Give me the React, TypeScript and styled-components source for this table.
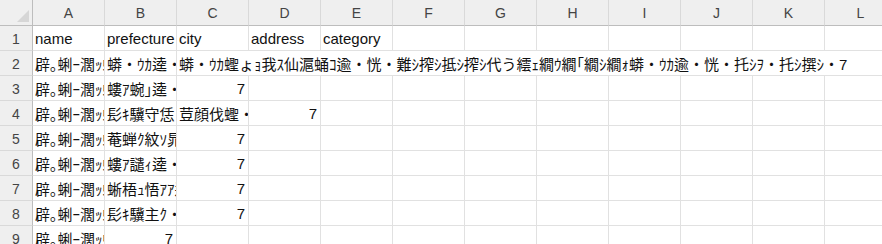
import React from "react";
import styled, { createGlobalStyle } from "styled-components";

const GlobalStyle = createGlobalStyle`
  html, body {
    margin: 0;
    padding: 0;
    background: #ffffff;
    overflow: hidden;
  }
  body {
    font-family: "Liberation Sans", "Noto Sans CJK JP", sans-serif;
  }
`;

const COLUMNS = ["A", "B", "C", "D", "E", "F", "G", "H", "I", "J", "K", "L"];

type CellData = {
  col: number;
  text: string;
  right?: boolean;
  span?: number;
};

const SHOP = "辟｡蜊ｰ濶ｯ蜩・";

const rows: CellData[][] = [
  [
    { col: 0, text: "name" },
    { col: 1, text: "prefecture" },
    { col: 2, text: "city" },
    { col: 3, text: "address" },
    { col: 4, text: "category" },
  ],
  [
    { col: 0, text: SHOP },
    { col: 1, text: "蟒・ｳｶ逵・" },
    {
      col: 2,
      span: 10,
      text: "蟒・ｳｶ蟶ょｮ我ｽ仙滬蛹ｺ逾・恍・難ｼ搾ｼ抵ｼ搾ｼ代う繧ｪ繝ｳ繝｢繝ｼ繝ｫ蟒・ｳｶ逾・恍・托ｼｦ・托ｼ撰ｼ・7",
    },
  ],
  [
    { col: 0, text: SHOP },
    { col: 1, text: "螻ｱ蜿｣逵・" },
    { col: 2, text: "7", right: true },
  ],
  [
    { col: 0, text: SHOP },
    { col: 1, text: "髟ｷ驥守恁" },
    { col: 2, text: "荳顔伐蟶・" },
    { col: 3, text: "7", right: true },
  ],
  [
    { col: 0, text: SHOP },
    { col: 1, text: "菴蝉ｸ紋ｿ晁ｸ・" },
    { col: 2, text: "7", right: true },
  ],
  [
    { col: 0, text: SHOP },
    { col: 1, text: "螻ｱ譴ｨ逵・" },
    { col: 2, text: "7", right: true },
  ],
  [
    { col: 0, text: SHOP },
    { col: 1, text: "蜥梧ｭ悟ｱｱ逵・" },
    { col: 2, text: "7", right: true },
  ],
  [
    { col: 0, text: SHOP },
    { col: 1, text: "髟ｷ驥主ｸ・" },
    { col: 2, text: "7", right: true },
  ],
  [
    { col: 0, text: SHOP },
    { col: 1, text: "7", right: true },
  ],
];

const Sheet = styled.div`
  display: grid;
  grid-template-columns: 33px repeat(12, 72px);
  grid-template-rows: 26px;
  grid-auto-rows: 25px;
  width: max-content;
`;

const Corner = styled.div`
  background: #efefef;
  border-right: 1px solid #bdbdbd;
  border-bottom: 1px solid #bdbdbd;
  display: flex;
  align-items: flex-end;
  justify-content: flex-end;
  padding: 0 3px 3px 0;
  box-sizing: border-box;
`;

const ColHeader = styled.div`
  background: #efefef;
  border-right: 1px solid #d9d9d9;
  border-bottom: 1px solid #bdbdbd;
  display: flex;
  align-items: center;
  justify-content: center;
  font-size: 14px;
  color: #444444;
  box-sizing: border-box;
`;

const RowHeader = styled.div`
  background: #efefef;
  border-right: 1px solid #bdbdbd;
  border-bottom: 1px solid #d9d9d9;
  display: flex;
  align-items: center;
  justify-content: center;
  font-size: 14px;
  color: #444444;
  padding-top: 1px;
  box-sizing: border-box;
`;

const Cell = styled.div<{ $right?: boolean; $span?: number }>`
  grid-column: span ${(p) => p.$span ?? 1};
  border-right: ${(p) => (p.$span && p.$span > 1 ? "none" : "1px solid #e1e1e1")};
  border-bottom: 1px solid #e1e1e1;
  display: flex;
  align-items: center;
  justify-content: ${(p) => (p.$right ? "flex-end" : "flex-start")};
  padding: 1px 3px 0 2px;
  font-size: 15px;
  color: #111111;
  white-space: nowrap;
  overflow: hidden;
  box-sizing: border-box;
`;

const CornerMark = () => (
  <svg width="12" height="12" viewBox="0 0 12 12">
    <polygon points="12,0 12,12 0,12" fill="#d6d6d6" />
  </svg>
);

const SheetRow: React.FC<{ index: number; cells: CellData[] }> = ({ index, cells }) => {
  const out: React.ReactNode[] = [<RowHeader key="h">{index}</RowHeader>];
  let col = 0;
  while (col < COLUMNS.length) {
    const cell = cells.find((c) => c.col === col);
    if (cell) {
      out.push(
        <Cell key={col} $right={cell.right} $span={cell.span}>
          {cell.text}
        </Cell>
      );
      col += cell.span ?? 1;
    } else {
      out.push(<Cell key={col} />);
      col += 1;
    }
  }
  return <>{out}</>;
};

const App: React.FC = () => {
  return (
    <>
      <GlobalStyle />
      <Sheet>
        <Corner>
          <CornerMark />
        </Corner>
        {COLUMNS.map((c) => (
          <ColHeader key={c}>{c}</ColHeader>
        ))}
        {rows.map((cells, i) => (
          <SheetRow key={i} index={i + 1} cells={cells} />
        ))}
      </Sheet>
    </>
  );
};

export default App;
